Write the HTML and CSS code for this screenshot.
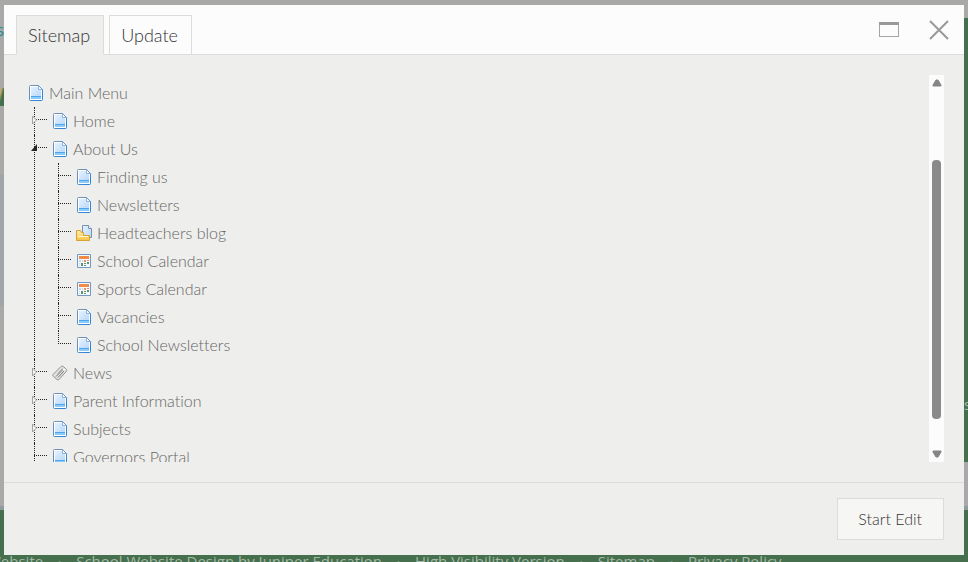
FILE: index.html
```html
<!DOCTYPE html>
<html lang="en">
<head>
  <meta charset="UTF-8">
  <meta name="viewport" content="width=device-width, initial-scale=1.0">
  <title>Sitemap</title>
  <link rel="stylesheet" href="styles.css">
</head>
<body>
  <!-- shared icons -->
  <svg class="sprites" aria-hidden="true">
    <defs>
      <linearGradient id="paper" x1="0" y1="0" x2="1" y2="1">
        <stop offset="0" stop-color="#e6f1fe"/>
        <stop offset="1" stop-color="#b9d9fa"/>
      </linearGradient>
      <linearGradient id="edge" x1="0" y1="0" x2="1" y2="1">
        <stop offset="0" stop-color="#7e93b0"/>
        <stop offset="1" stop-color="#2381e0"/>
      </linearGradient>
      <linearGradient id="gold" x1="0" y1="0" x2="0" y2="1">
        <stop offset="0" stop-color="#fff0ac"/>
        <stop offset="1" stop-color="#f5c345"/>
      </linearGradient>
    </defs>
    <symbol id="page" viewBox="0 0 16 16">
      <path d="M2.500 .5h8l4 4v10q0 1-1 1h-11q-1 0-1-1v-13q0-1 1-1z" fill="#fff" stroke="url(#edge)"/>
      <path d="M3 2h7l3 3v6H3z" fill="url(#paper)"/>
      <path d="M10.500 1v3.500H14" fill="#fff" stroke="#8fb2da"/>
      <path d="M3 12h10v2H3z" fill="#8ccbf7"/>
      <path d="M3 11.500h10" stroke="#4ba6ed"/>
    </symbol>
    <symbol id="folder" viewBox="0 0 16 16">
      <path d="M6.500 .5h6l3 3v9h-9z" fill="url(#paper)" stroke="#7791b2"/>
      <path d="M12.500 .5v3h3" fill="#fff" stroke="#7791b2"/>
      <path d="M.5 5.500h4l1 2h2v3h6v5H.5z" fill="url(#gold)" stroke="#d9a032"/>
      <path d="M2 11.500h10" stroke="#fff6c8"/>
    </symbol>
    <symbol id="calendar" viewBox="0 0 16 16">
      <path d="M1.500 1.500h13v13h-13z" fill="#f4f9ff" stroke="#7299c5"/>
      <path d="M3 3h10v3H3z" fill="#f28b45"/>
      <path d="M3 7h2v2H3zM6 7h1v2H6zM3 10h1v1H3zM3 12h1v1H3z" fill="#c3d5e8"/>
      <path d="M8 7h2v2H8zM11 7h2v1h-2z" fill="#e58c65"/>
      <path d="M5 10h2v3H5zM8 10h2v1H8zM8 12h2v1H8zM11 9h2v2h-2z" fill="#62926f"/>
    </symbol>
    <symbol id="tag" viewBox="0 0 16 16">
      <path d="M1 9.500 9 1.500Q10.500 .5 12 2l2.500 2.500q.5 1-.3 2L7 14.500q-1 1-2 0L1.500 11.500q-1-1-.5-2z" fill="#e2e2e1" stroke="#929291"/>
      <path d="M4 11.500 11.500 4M6 12.500l6-6.500" stroke="#777"/>
      <path d="m5.500 8.500 5-5" stroke="#aaa"/>
      <circle cx="12" cy="4.500" r="1" fill="#fff"/>
    </symbol>
    <symbol id="closed" viewBox="0 0 7 10">
      <path d="M1.500 1v8l4-4z" fill="#f5f5f4" stroke="#a2a2a2"/>
    </symbol>
    <symbol id="open" viewBox="0 0 7 10">
      <path d="M6 1v7H0z" fill="#252525"/>
    </symbol>
  </svg>

  <!-- site behind the dialog -->
  <div class="site" aria-hidden="true">
    <div class="site-left">
      <span class="site-name">s</span>
      <span class="site-mark"></span>
      <span class="site-band"></span>
    </div>
    <div class="site-right">
      <span class="site-word">s</span>
      <span class="site-panel"></span>
    </div>
    <ul class="site-footer">
      <li>Website</li>
      <li>School Website Design by Juniper Education</li>
      <li>High Visibility Version</li>
      <li>Sitemap</li>
      <li>Privacy Policy</li>
    </ul>
  </div>

  <div class="dialog" role="dialog" aria-label="Sitemap">
    <header class="dialog-header">
      <nav class="tabs">
        <a class="tab active" href="#sitemap">Sitemap</a>
        <a class="tab" href="#update">Update</a>
      </nav>
      <div class="window-buttons">
        <button type="button" aria-label="Maximise">
          <svg width="20" height="16" viewBox="0 0 20 16"><path d="M.5 1v14M19.500 1v14M0 14.500h20" stroke="#a5a5a5" fill="none"/><path d="M0 1.500h20" stroke="#999" stroke-width="3"/></svg>
        </button>
        <button type="button" aria-label="Close">
          <svg width="20" height="20" viewBox="0 0 20 20"><path d="m1 1 18 18M19 1 1 19" stroke="#999" stroke-width="2"/></svg>
        </button>
      </div>
    </header>

    <main class="dialog-body" id="sitemap">
      <div class="tree">
        <a class="node" href="#"><svg><use href="#page"/></svg>Main Menu</a>
        <ul>
          <li>
            <button class="toggle" type="button" aria-label="Expand Home"><svg><use href="#closed"/></svg></button>
            <a class="node" href="#"><svg><use href="#page"/></svg>Home</a>
          </li>
          <li>
            <button class="toggle" type="button" aria-label="Collapse About Us"><svg><use href="#open"/></svg></button>
            <a class="node" href="#"><svg><use href="#page"/></svg>About Us</a>
            <ul>
              <li><a class="node" href="#"><svg><use href="#page"/></svg>Finding us</a></li>
              <li><a class="node" href="#"><svg><use href="#page"/></svg>Newsletters</a></li>
              <li><a class="node" href="#"><svg><use href="#folder"/></svg>Headteachers blog</a></li>
              <li><a class="node" href="#"><svg><use href="#calendar"/></svg>School Calendar</a></li>
              <li><a class="node" href="#"><svg><use href="#calendar"/></svg>Sports Calendar</a></li>
              <li><a class="node" href="#"><svg><use href="#page"/></svg>Vacancies</a></li>
              <li class="last"><a class="node" href="#"><svg><use href="#page"/></svg>School Newsletters</a></li>
            </ul>
          </li>
          <li>
            <button class="toggle" type="button" aria-label="Expand News"><svg><use href="#closed"/></svg></button>
            <a class="node" href="#"><svg><use href="#tag"/></svg>News</a>
          </li>
          <li>
            <button class="toggle" type="button" aria-label="Expand Parent Information"><svg><use href="#closed"/></svg></button>
            <a class="node" href="#"><svg><use href="#page"/></svg>Parent Information</a>
          </li>
          <li>
            <button class="toggle" type="button" aria-label="Expand Subjects"><svg><use href="#closed"/></svg></button>
            <a class="node" href="#"><svg><use href="#page"/></svg>Subjects</a>
          </li>
          <li><a class="node" href="#"><svg><use href="#page"/></svg>Governors Portal</a></li>
        </ul>
      </div>
      <div class="scrollbar" aria-hidden="true">
        <svg width="10" height="8" viewBox="0 0 10 8"><path d="M4 1h2l3 5v1H1V6z" fill="#858585" stroke="#858585"/></svg>
        <div class="track"><div class="thumb"></div></div>
        <svg width="10" height="8" viewBox="0 0 10 8"><path d="M1 1h8v1L6 7H4L1 2z" fill="#858585" stroke="#858585"/></svg>
      </div>
    </main>

    <footer class="dialog-footer">
      <button class="start" type="button">Start Edit</button>
    </footer>
  </div>
</body>
</html>
```
FILE: styles.css
```css
* {
  box-sizing: border-box;
}
body {
  margin: 0;
  height: 100vh;
  padding: 5px 4px 7px;
  background: #a9a9a8;
  font-family: Lato, sans-serif;
  font-weight: 300;
  font-variant-ligatures: none;
  overflow: hidden;
}
ul {
  list-style: none;
  margin: 0;
  padding: 0;
}
a {
  color: inherit;
  text-decoration: none;
}
button {
  font: inherit;
  color: inherit;
  border: none;
  background: none;
  padding: 0;
  cursor: pointer;
}
svg {
  display: block;
}
.sprites {
  position: absolute;
  width: 0;
  height: 0;
}

/* page under the dialog */
.site {
  position: absolute;
  inset: 0;
  overflow: hidden;
  font-family: "Open Sans", sans-serif;
  font-weight: 400;
}
.site-left,
.site-right {
  position: absolute;
  top: 0;
  bottom: 52px;
  width: 20px;
  border-bottom: 4px solid #8e9c9c;
}
.site-left {
  left: 0;
}
.site-right {
  right: 0;
  top: 18px;
  background: #456f4d;
}
.site-name {
  position: absolute;
  top: 18px;
  left: -4px;
  font-size: 17px;
  color: #298c96;
}
.site-mark {
  position: absolute;
  top: 88px;
  width: 20px;
  height: 18px;
  background: linear-gradient(105deg, #a9a9a8 1px, #c0a34f 2px, #456f4d 4px);
}
.site-band {
  position: absolute;
  top: 175px;
  bottom: 200px;
  width: 20px;
  background: #a1a4a8;
}
.site-word {
  position: absolute;
  top: 376px;
  left: 16px;
  font-size: 15px;
  color: #a8bcaa;
}
.site-panel {
  position: absolute;
  bottom: 0;
  width: 20px;
  height: 44px;
  background: #aaa8aa;
}
.site-footer {
  position: absolute;
  left: -13px;
  right: 0;
  bottom: 0;
  height: 52px;
  padding-top: 41px;
  display: flex;
  background: #456f4d;
  color: #a3b8a7;
  font-size: 15px;
  line-height: 20px;
  white-space: nowrap;
}
.site-footer li + li::before {
  content: "·";
  display: inline-block;
  width: 33px;
  text-align: center;
  color: #7fa386;
}

.dialog {
  position: relative;
  height: 100%;
  display: flex;
  flex-direction: column;
  background: #eeeeec;
  color: #333;
}
.dialog-header {
  display: flex;
  justify-content: space-between;
  height: 50px;
  padding: 10px 15px 0 12px;
  background: #fcfcfd;
  border-bottom: 1px solid #dcdcda;
}
.tabs {
  display: flex;
  gap: 5px;
}
.tab {
  height: 40px;
  padding: 0 13px 0 11px;
  border: 1px solid #dcdcda;
  font-size: 18px;
  line-height: 38px;
}
.tab.active {
  background: #eeeeec;
  border-bottom-color: #eeeeec;
}
.window-buttons {
  display: flex;
  align-items: center;
  gap: 30px;
  height: 30px;
}

.dialog-body {
  flex: 1;
  min-height: 0;
  display: flex;
  padding: 20px 20px 20px 24px;
}
.tree {
  flex: 1;
  min-width: 0;
  padding-top: 4px;
  overflow: hidden;
  color: #666;
  font-size: 16px;
}
.tree ul {
  padding-left: 24px;
}
.tree li {
  position: relative;
}
.tree li::before,
.tree li::after {
  content: "";
  position: absolute;
  left: -18px;
}
.tree li::before {
  top: 0;
  bottom: 0;
  border-left: 1px dotted #222;
}
.tree li::after {
  top: 12px;
  width: 13px;
  border-top: 1px dotted #222;
}
.tree li.last::before {
  bottom: 15px;
}
.node {
  display: flex;
  gap: 5px;
  height: 28px;
  line-height: 28px;
}
.node svg {
  width: 16px;
  height: 16px;
  margin-top: 6px;
}
.toggle {
  position: absolute;
  z-index: 1;
  top: 8px;
  left: -21px;
}
.toggle svg {
  width: 7px;
  height: 10px;
}
.scrollbar {
  width: 15px;
  display: flex;
  flex-direction: column;
  align-items: center;
  justify-content: space-between;
  padding: 4px 0;
  background: #fcfcfd;
}
.track {
  flex: 1;
  display: flex;
  flex-direction: column;
  padding: 8px 0;
}
.track::before {
  content: "";
  flex: 65;
}
.track::after {
  content: "";
  flex: 23;
}
.thumb {
  flex: 259;
  width: 9px;
  border-radius: 4px;
  background: #8a8a8a;
}

.dialog-footer {
  display: flex;
  justify-content: flex-end;
  padding: 15px 20px;
  border-top: 1px solid #dcdcda;
}
.start {
  height: 42px;
  padding: 0 21px 2px 20px;
  border: 1px solid #dcdcdd;
  background: #f6f6f5;
  font-size: 16px;
}
```
